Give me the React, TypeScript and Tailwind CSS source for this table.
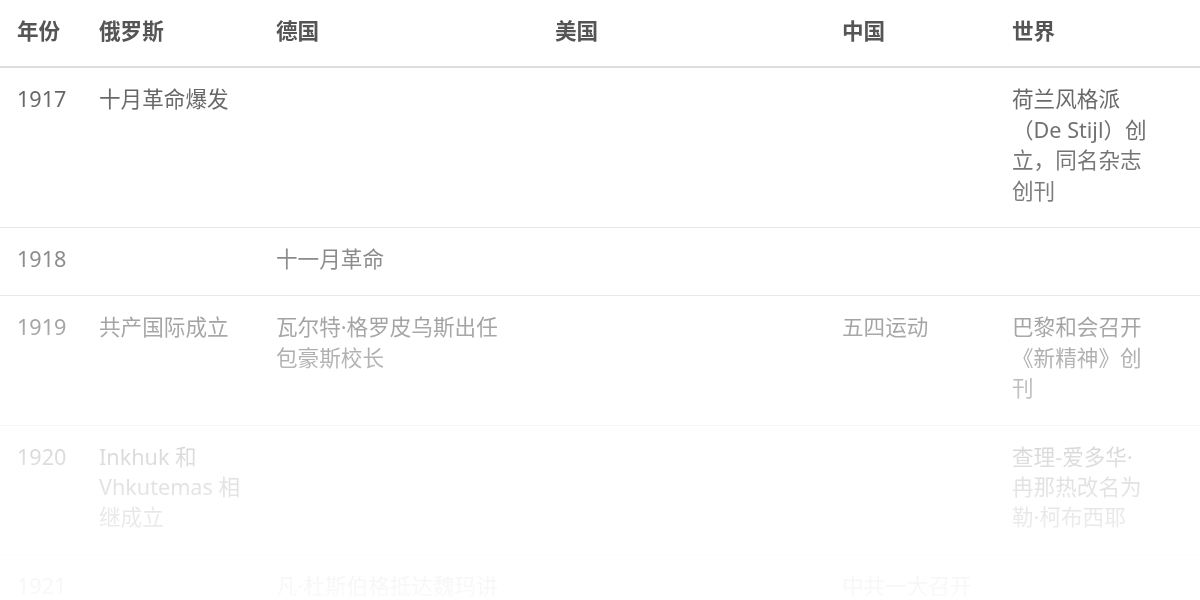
type Row = {
  year: string;
  cells: string[]; // 俄罗斯, 德国, 美国, 中国, 世界
};

const headers = ["年份", "俄罗斯", "德国", "美国", "中国", "世界"];

const rows: Row[] = [
  { year: "1917", cells: ["十月革命爆发", "", "", "", "荷兰风格派（De Stijl）创立，同名杂志创刊"] },
  { year: "1918", cells: ["", "十一月革命", "", "", ""] },
  { year: "1919", cells: ["共产国际成立", "瓦尔特·格罗皮乌斯出任包豪斯校长", "", "五四运动", "巴黎和会召开《新精神》创刊"] },
  { year: "1920", cells: ["Inkhuk 和 Vhkutemas 相继成立", "", "", "", "查理-爱多华·冉那热改名为勒·柯布西耶"] },
  { year: "1921", cells: ["", "凡·杜斯伯格抵达魏玛讲授风格派课程", "", "中共一大召开", ""] },
];

// 각 열의 오른쪽 여백 (줄바꿈 위치를 맞추기 위함)
const cols = [
  "pr-[10px]",
  "pr-[8px]",
  "pr-[30px]",
  "pr-[30px]",
  "pr-[10px]",
  "pr-[51px]",
];

const grid = "grid grid-cols-[82px_177px_279px_287px_170px_205px]";

export default function App() {
  return (
    <div
      className="w-[1200px] h-[600px] overflow-hidden bg-white text-[#555] text-[21.6px] leading-[30.4px] [mask-image:linear-gradient(to_bottom,#000_60px,rgba(0,0,0,0.88)_100px,rgba(0,0,0,0.68)_260px,rgba(0,0,0,0.52)_330px,rgba(0,0,0,0.2)_460px,rgba(0,0,0,0.05)_580px,rgba(0,0,0,0.03)_600px)]"
      style={{ fontFamily: '"Noto Sans", "Noto Sans CJK SC", sans-serif' }}
    >
      <div className={`${grid} border-b-2 border-[#dcdcdc] font-bold`}>
        {headers.map((h, i) => (
          <div key={h} className={`pl-[17px] pt-[16px] pb-[20px] ${cols[i]}`}>
            {h}
          </div>
        ))}
      </div>
      {rows.map((r) => (
        <div key={r.year} className={`${grid} border-b border-[#dcdcdc]`}>
          {[r.year, ...r.cells].map((c, i) => (
            <div key={i} className={`pl-[17px] pt-[16px] pb-[21px] ${cols[i]}`}>
              {c}
            </div>
          ))}
        </div>
      ))}
    </div>
  );
}
